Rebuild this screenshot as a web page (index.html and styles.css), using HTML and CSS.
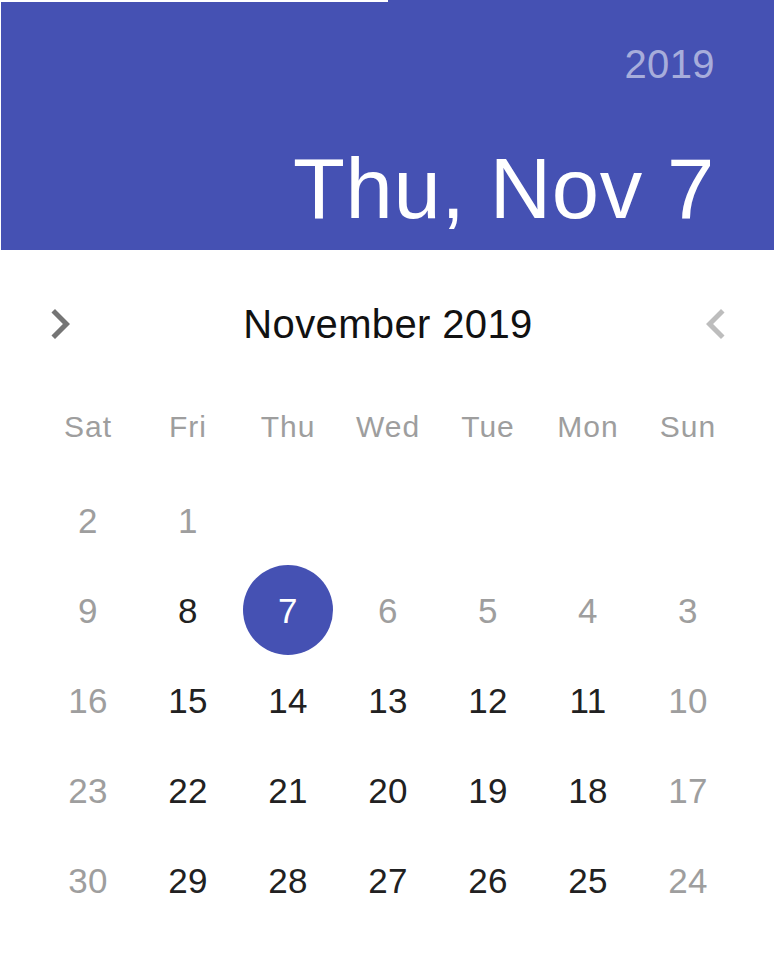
FILE: index.html
```html
<!DOCTYPE html>
<html lang="en">

<head>
  <meta charset="UTF-8" />
  <title>Date Picker</title>
  <meta name="viewport" content="width=device-width, initial-scale=1" />
  <link rel="stylesheet" href="styles.css">
</head>

<body>
  <div class="picker">
    <!-- Selected date header -->
    <div class="toolbar">
      <span class="toolbar-year">2019</span>
      <span class="toolbar-date">Thu, Nov 7</span>
    </div>

    <!-- Month switcher -->
    <div class="switcher">
      <button class="nav-btn" type="button">
        <svg viewBox="0 0 24 24" width="60" height="60">
          <path d="M10 6L8.59 7.41 13.17 12l-4.58 4.59L10 18l6-6z" />
        </svg>
      </button>
      <div class="month-title">November 2019</div>
      <button class="nav-btn nav-btn-disabled" type="button" disabled>
        <svg viewBox="0 0 24 24" width="60" height="60">
          <path d="M15.41 7.41L14 6l-6 6 6 6 1.41-1.41L10.83 12z" />
        </svg>
      </button>
    </div>

    <div class="weekdays">
      <span>Sat</span>
      <span>Fri</span>
      <span>Thu</span>
      <span>Wed</span>
      <span>Tue</span>
      <span>Mon</span>
      <span>Sun</span>
    </div>

    <div class="days">
      <span class="day day-off">2</span>
      <span class="day day-off">1</span>
      <span class="day"></span>
      <span class="day"></span>
      <span class="day"></span>
      <span class="day"></span>
      <span class="day"></span>

      <span class="day day-off">9</span>
      <span class="day">8</span>
      <span class="day"><span class="day-selected">7</span></span>
      <span class="day day-off">6</span>
      <span class="day day-off">5</span>
      <span class="day day-off">4</span>
      <span class="day day-off">3</span>

      <span class="day day-off">16</span>
      <span class="day">15</span>
      <span class="day">14</span>
      <span class="day">13</span>
      <span class="day">12</span>
      <span class="day">11</span>
      <span class="day day-off">10</span>

      <span class="day day-off">23</span>
      <span class="day">22</span>
      <span class="day">21</span>
      <span class="day">20</span>
      <span class="day">19</span>
      <span class="day">18</span>
      <span class="day day-off">17</span>

      <span class="day day-off">30</span>
      <span class="day">29</span>
      <span class="day">28</span>
      <span class="day">27</span>
      <span class="day">26</span>
      <span class="day">25</span>
      <span class="day day-off">24</span>
    </div>
  </div>
</body>

</html>
```

FILE: styles.css
```css
body {
  margin: 0;
  background: #fff;
  font-family: 'Liberation Sans', Arial, sans-serif;
  color: #212121;
}

.picker {
  width: 774px;
}

/* header */
.toolbar {
  position: relative;
  margin-left: 1px;
  height: 250px;
  box-sizing: border-box;
  padding: 44px 59px 0 0;
  background-color: #4551b3;
  display: flex;
  flex-direction: column;
  align-items: flex-end;
  gap: 62px;
}

.toolbar::before {
  content: '';
  position: absolute;
  top: 0;
  left: -1px;
  width: 388px;
  height: 2px;
  background: #fff;
}

.toolbar-year {
  font-size: 40px;
  line-height: 1;
  letter-spacing: 0.00938em;
  color: rgba(255, 255, 255, 0.54);
}

.toolbar-date {
  font-size: 85px;
  line-height: 1;
  letter-spacing: 0.00735em;
  color: #fff;
}

/* month switcher */
.switcher {
  display: flex;
  align-items: center;
  height: 60px;
  margin-top: 44px;
  padding: 0 28px 0 30px;
}

.nav-btn {
  width: 60px;
  height: 60px;
  padding: 0;
  border: none;
  background: none;
  display: flex;
  fill: #757575;
}

.nav-btn-disabled {
  fill: #bdbdbd;
}

.month-title {
  flex: 1;
  text-align: center;
  font-size: 40px;
  line-height: 1;
  letter-spacing: 0.00938em;
  color: #111;
}

/* calendar grid */
.weekdays,
.days {
  display: grid;
  grid-template-columns: repeat(7, 100px);
  margin-left: 38px;
}

.weekdays {
  margin-top: 53px;
  height: 40px;
  font-size: 30px;
  letter-spacing: 1px;
  color: #9e9e9e;
}

.weekdays span {
  display: flex;
  align-items: center;
  justify-content: center;
  line-height: 1;
}

.days {
  margin-top: 28px;
  grid-auto-rows: 90px;
}

.day {
  display: flex;
  align-items: center;
  justify-content: center;
  font-size: 35px;
  line-height: 1;
  letter-spacing: 0.01071em;
  color: #212121;
}

.day-off {
  color: #9e9e9e;
}

.day-selected {
  width: 90px;
  height: 90px;
  border-radius: 50%;
  background-color: #4551b3;
  color: #fff;
  display: flex;
  align-items: center;
  justify-content: center;
}
```
